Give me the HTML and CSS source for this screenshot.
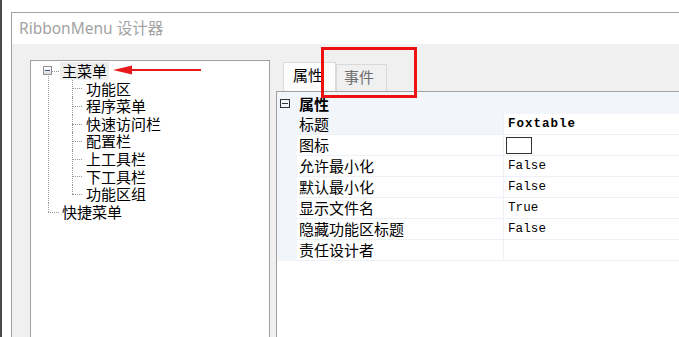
FILE: index.html
```html
<!DOCTYPE html>
<html lang="zh-CN">
<head>
    <meta charset="UTF-8">
    <title>RibbonMenu 设计器</title>
    <link rel="stylesheet" href="styles.css">
</head>
<body>
<div class="window">
    <div class="titlebar">RibbonMenu 设计器</div>
    <div class="client">
        <div class="tree">
            <ul class="tree-list">
                <li>
                    <div class="row"><span class="expander"></span><span class="node-label current">主菜单</span></div>
                    <ul>
                        <li><div class="row"><span class="node-label">功能区</span></div></li>
                        <li><div class="row"><span class="node-label">程序菜单</span></div></li>
                        <li><div class="row"><span class="node-label">快速访问栏</span></div></li>
                        <li><div class="row"><span class="node-label">配置栏</span></div></li>
                        <li><div class="row"><span class="node-label">上工具栏</span></div></li>
                        <li><div class="row"><span class="node-label">下工具栏</span></div></li>
                        <li><div class="row"><span class="node-label">功能区组</span></div></li>
                    </ul>
                </li>
                <li><div class="row"><span class="node-label">快捷菜单</span></div></li>
            </ul>
        </div>

        <div class="props">
            <div class="tabs">
                <div class="tab active">属性</div>
                <div class="tab">事件</div>
            </div>
            <div class="grid">
                <div class="cat-row">
                    <span class="cat-margin"><span class="collapse"></span></span>
                    <span class="cat-name">属性</span>
                </div>
                <div class="prop-row first">
                    <span class="margin"></span>
                    <span class="label">标题</span>
                    <span class="value bold">Foxtable</span>
                </div>
                <div class="prop-row">
                    <span class="margin"></span>
                    <span class="label">图标</span>
                    <span class="value"><span class="icon-box"></span></span>
                </div>
                <div class="prop-row">
                    <span class="margin"></span>
                    <span class="label">允许最小化</span>
                    <span class="value">False</span>
                </div>
                <div class="prop-row">
                    <span class="margin"></span>
                    <span class="label">默认最小化</span>
                    <span class="value">False</span>
                </div>
                <div class="prop-row">
                    <span class="margin"></span>
                    <span class="label">显示文件名</span>
                    <span class="value">True</span>
                </div>
                <div class="prop-row">
                    <span class="margin"></span>
                    <span class="label">隐藏功能区标题</span>
                    <span class="value">False</span>
                </div>
                <div class="prop-row">
                    <span class="margin"></span>
                    <span class="label">责任设计者</span>
                    <span class="value"></span>
                </div>
            </div>
        </div>
    </div>
</div>

<!-- annotations drawn on top of the screenshot -->
<svg class="note-arrow" width="92" height="14" viewBox="0 0 92 14">
    <line x1="16" y1="7" x2="88" y2="7" stroke="#e8191c" stroke-width="2"/>
    <polygon points="0,7 19,2.5 19,11.5" fill="#e8191c"/>
</svg>
<div class="note-box"></div>
</body>
</html>
```

FILE: styles.css
```css
body {
    margin: 0;
    width: 679px;
    height: 337px;
    overflow: hidden;
    background: #fff;
    border-left: 2px solid #4b4b4b;
    box-sizing: border-box;
    position: relative;
    font-family: "Noto Sans", "Noto Sans CJK SC", sans-serif;
    color: #000;
}

.window {
    margin: 12px 0 0 9px;
    height: 325px;
    border-top: 1px solid #a0a0a0;
    border-left: 1px solid #a0a0a0;
    display: flex;
    flex-direction: column;
}
.titlebar {
    height: 31px;
    line-height: 31px;
    padding-left: 7px;
    font-size: 15.5px;
    color: #a3a3a3;
    background: #fff;
}
.client {
    flex: 1;
    display: flex;
    gap: 6px;
    padding: 16px 0 0 18px;
    background: #f0f0f0;
}

/* tree */
.tree {
    width: 240px;
    box-sizing: border-box;
    border: 1px solid #a0a0a0;
    border-bottom: none;
    background: #fff;
    padding-top: 1px;
    font-family: "Noto Sans CJK SC", sans-serif;
    font-size: 15px;
}
.tree-list, .tree-list ul {
    list-style: none;
    margin: 0;
    padding: 0;
}
.tree-list li {
    position: relative;
}
.tree-list > li {
    padding-left: 29px;
}
.tree-list ul > li {
    padding-left: 24px;
}
.row {
    height: 17.6px;
    line-height: 17.6px;
}
.node-label {
    display: inline-block;
    padding: 0 2px;
    height: 17.6px;
}
.node-label.current {
    background: #ededed;
}

.tree-list li::before {
    content: "";
    position: absolute;
    top: 0;
    bottom: 0;
    border-left: 1px dotted #9a9a9a;
}
.tree-list li::after {
    content: "";
    position: absolute;
    top: 8.8px;
    border-top: 1px dotted #9a9a9a;
}
.tree-list > li::before { left: 17px; }
.tree-list > li::after { left: 17px; width: 11px; }
.tree-list > li:first-child::before { top: 8.8px; }
.tree-list li:last-child::before { bottom: auto; height: 8.8px; }
.tree-list ul > li::before { left: 12px; }
.tree-list ul > li::after { left: 12px; width: 10px; }

.expander {
    position: absolute;
    left: 12px;
    top: 4px;
    width: 9px;
    height: 9px;
    box-sizing: border-box;
    border: 1px solid #919191;
    background: linear-gradient(#fff, #dcdcdc);
    z-index: 1;
}
.expander::after {
    content: "";
    position: absolute;
    left: 1px;
    top: 3px;
    width: 5px;
    height: 1px;
    background: #3b5685;
}

/* property panel */
.props {
    flex: 1;
    display: flex;
    flex-direction: column;
    padding-top: 2px;
}
.tabs {
    display: flex;
    align-items: flex-end;
    height: 29px;
    padding-left: 7px;
    font-family: "Noto Sans CJK SC", sans-serif;
    font-size: 15px;
}
.tab {
    box-sizing: border-box;
    height: 27px;
    width: 51px;
    padding-left: 7px;
    line-height: 24px;
    border: 1px solid #d9d9d9;
    border-bottom: none;
    background: #f0f0f0;
    color: #6d6d6d;
}
.tab.active {
    height: 29px;
    width: 53px;
    padding-left: 9px;
    background: #fcfcfc;
    color: #000;
}

.grid {
    flex: 1;
    background: #fff;
    border-top: 1px solid #a0a0a0;
    border-left: 1px solid #a0a0a0;
    font-family: "Noto Sans CJK SC", sans-serif;
    font-size: 15px;
}
.cat-row {
    display: flex;
    align-items: center;
    height: 22px;
    background: #f2f5fa;
}
.cat-margin {
    width: 20px;
    display: flex;
    align-items: center;
    padding-left: 3px;
    box-sizing: border-box;
}
.collapse {
    position: relative;
    width: 10px;
    height: 9px;
    box-sizing: border-box;
    border: 1px solid #333;
}
.collapse::after {
    content: "";
    position: absolute;
    left: 1px;
    right: 1px;
    top: 3px;
    height: 1px;
    background: #333;
}
.cat-name {
    font-weight: bold;
    padding-left: 2px;
}

.prop-row {
    display: flex;
    height: 21px;
    line-height: 20px;
}
.margin {
    width: 20px;
    background: #f2f5fa;
}
.label {
    width: 206px;
    box-sizing: border-box;
    padding-left: 2px;
    border-bottom: 1px solid #edf1f7;
}
.prop-row.first .label {
    background: #f2f5fa;
}
.value {
    flex: 1;
    display: flex;
    align-items: center;
    padding-left: 4px;
    border-left: 1px solid #edf1f7;
    border-bottom: 1px solid #edf1f7;
    font-family: "Liberation Mono", monospace;
    font-size: 12.5px;
    letter-spacing: 0.1px;
}
.value.bold {
    font-weight: bold;
    letter-spacing: 1px;
}
.icon-box {
    width: 24px;
    height: 15px;
    margin-left: -2px;
    border: 1px solid #333;
    background: #fff;
}

/* annotations */
.note-arrow {
    position: absolute;
    left: 111px;
    top: 63px;
}
.note-box {
    position: absolute;
    left: 319px;
    top: 47px;
    width: 96px;
    height: 51px;
    box-sizing: border-box;
    border: 3px solid #ee1111;
}
```
